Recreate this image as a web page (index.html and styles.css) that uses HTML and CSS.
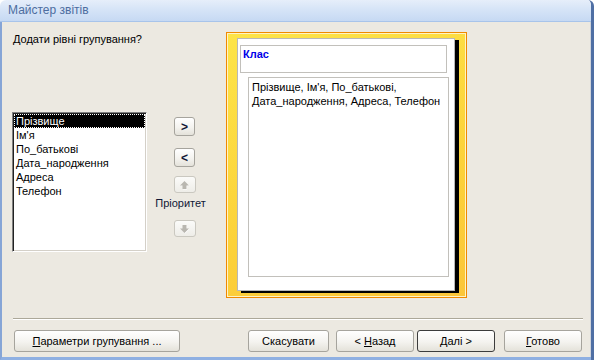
FILE: index.html
```html
<!DOCTYPE html>
<html lang="uk">
  <head>
    <meta charset="UTF-8" />
    <title>Майстер звітів</title>
    <link rel="stylesheet" href="styles.css">
  </head>
  <body>
    <div class="window">
      <div class="titlebar">Майстер звітів</div>

      <div class="dialog">
        <div class="main">
          <div class="fields">
            <div class="question">Додати рівні групування?</div>
            <ul class="listbox">
              <li class="selected">Прізвище</li>
              <li>Ім'я</li>
              <li>По_батькові</li>
              <li>Дата_народження</li>
              <li>Адреса</li>
              <li>Телефон</li>
            </ul>
          </div>

          <div class="controls">
            <button class="btn small add">&gt;</button>
            <button class="btn small remove">&lt;</button>
            <button class="btn small disabled up">
              <svg width="11" height="10" viewBox="0 0 11 10">
                <path d="M5.5 1 L10 5.5 H7.5 V9 H3.5 V5.5 H1 Z" fill="#fff" transform="translate(0.6 0.6)" />
                <path d="M5.5 1 L10 5.5 H7.5 V9 H3.5 V5.5 H1 Z" fill="#b9b7b0" />
              </svg>
            </button>
            <div class="priority">Пріоритет</div>
            <button class="btn small disabled down">
              <svg width="11" height="10" viewBox="0 0 11 10">
                <path d="M5.5 9 L10 4.5 H7.5 V1 H3.5 V4.5 H1 Z" fill="#fff" transform="translate(0.6 0.6)" />
                <path d="M5.5 9 L10 4.5 H7.5 V1 H3.5 V4.5 H1 Z" fill="#b9b7b0" />
              </svg>
            </button>
          </div>

          <div class="preview">
            <div class="page">
              <div class="group-header">Клас</div>
              <div class="detail">Прізвище, Ім'я, По_батькові, Дата_народження, Адреса, Телефон</div>
            </div>
          </div>
        </div>

        <div class="separator"></div>

        <div class="footer">
          <button class="btn options"><u>П</u>араметри групування ...</button>
          <button class="btn cancel">Скасувати</button>
          <button class="btn back">&lt; <u>Н</u>азад</button>
          <button class="btn next default"><u>Д</u>алі &gt;</button>
          <button class="btn finish"><u>Г</u>отово</button>
        </div>
      </div>
    </div>
  </body>
</html>
```

FILE: styles.css
```css
body {
  margin: 0;
  background-color: #fff;
  font-family: "Liberation Sans", Arial, sans-serif;
  font-size: 11px;
  color: #000;
}

.window {
  width: 594px;
  height: 360px;
  box-sizing: border-box;
  display: flex;
  flex-direction: column;
  border-right: 3px solid #4f6fa4;
  border-radius: 6px 6px 0 0;
  overflow: hidden;
}

.titlebar {
  height: 21px;
  line-height: 21px;
  padding-left: 8px;
  font-size: 12px;
  color: #4d6d9f;
  background: linear-gradient(#e6eefa, #d6e4f7 45%, #c6d9f3);
  border-bottom: 1px solid #a8c4ea;
}

.dialog {
  flex: 1;
  display: flex;
  flex-direction: column;
  background-color: #ece9e1;
  border-left: 2px solid #86a5d6;
  border-bottom: 3px solid #8fb0e2;
  box-shadow: inset -1px 0 0 #cfd3da;
}

.main {
  display: flex;
  padding: 10px 0 0 10px;
}

.fields {
  width: 135px;
}

.question {
  margin: 1px 0 0 1px;
  line-height: 13px;
}

.listbox {
  list-style: none;
  margin: 66px 0 0 0;
  width: 135px;
  height: 140px;
  box-sizing: border-box;
  background-color: #fff;
  border: 1px solid;
  border-color: #808080 #fff #fff #808080;
  box-shadow: inset 1px 1px 0 #222, inset -1px -1px 0 #d4d0c8;
  padding: 1px;
}

.listbox li {
  line-height: 14px;
  padding-left: 2px;
  white-space: nowrap;
}

.listbox li.selected {
  background-color: #000;
  color: #fff;
  outline: 1px dotted #fff;
  outline-offset: -1px;
}

.controls {
  width: 79px;
  box-sizing: border-box;
  display: flex;
  flex-direction: column;
  align-items: center;
  padding: 85px 4px 0 0;
}

.btn {
  font-family: "Liberation Sans", Arial, sans-serif;
  font-size: 11px;
  color: #000;
  height: 22px;
  padding: 0;
  border: 1px solid #a6a49d;
  border-radius: 3px;
  background: linear-gradient(#ffffff, #f4f3ef 55%, #e4e2da);
  box-sizing: border-box;
}

.btn u {
  text-decoration: underline;
  text-underline-offset: 1px;
}

.btn.small {
  width: 21px;
  height: 19px;
  font-size: 12px;
  font-weight: bold;
  color: #111836;
  display: flex;
  align-items: center;
  justify-content: center;
}

.btn.remove {
  margin-top: 12px;
}

.btn.disabled {
  width: 22px;
  height: 17px;
  border-color: #cac8c0;
  background: linear-gradient(#fbfbf9, #eeede8);
}

.btn.up {
  margin-top: 9px;
}

.priority {
  margin: 4px 8px 0 0;
  line-height: 13px;
  color: #111836;
}

.btn.down {
  margin-top: 10px;
}

.preview {
  width: 241px;
  height: 266px;
  box-sizing: border-box;
  border: 1px solid #f08a00;
  box-shadow: inset 0 0 0 1px #fff3c4;
  background: linear-gradient(160deg, #fde448, #fcd23a 60%, #fbc63a);
  padding: 5px 0 0 10px;
}

.page {
  width: 218px;
  height: 253px;
  box-sizing: border-box;
  background-color: #fff;
  border: 1px solid #b8b8b8;
  box-shadow: 4px 2px 0 #000;
  padding: 6px 0 0 2px;
}

.group-header {
  width: 207px;
  height: 28px;
  box-sizing: border-box;
  border: 1px solid #c2c0bb;
  padding: 2px 2px;
  font-weight: bold;
  color: #0000e8;
  line-height: 13px;
}

.detail {
  width: 201px;
  height: 200px;
  box-sizing: border-box;
  margin: 4px 0 0 8px;
  border: 1px solid #c2c0bb;
  padding: 2px 3px;
  line-height: 14px;
}

.separator {
  margin: 20px 8px 0 11px;
  border-top: 1px solid #aca899;
  border-bottom: 1px solid #fff;
}

.footer {
  display: flex;
  padding: 10px 0 0 12px;
}

.btn.options {
  width: 166px;
}

.btn.cancel {
  width: 81px;
  margin-left: 68px;
}

.btn.back {
  width: 78px;
  margin-left: 7px;
}

.btn.next {
  width: 78px;
  margin-left: 3px;
}

.btn.default {
  border-color: #3c3c3c;
}

.btn.finish {
  width: 78px;
  margin-left: 9px;
}
```
